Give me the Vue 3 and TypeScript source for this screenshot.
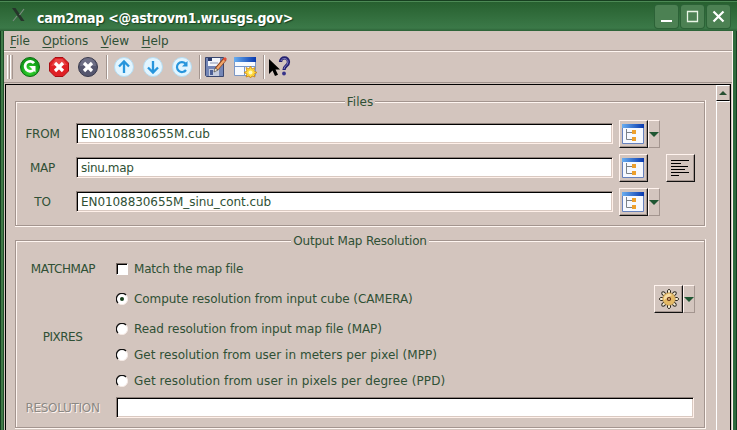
<script setup lang="ts">
interface FileRow { label: string; value: string; menu: boolean; align: boolean }

const menus: string[] = ['File', 'Options', 'View', 'Help']
const files: FileRow[] = [
  { label: 'FROM', value: 'EN0108830655M.cub', menu: true, align: false },
  { label: 'MAP', value: 'sinu.map', menu: false, align: true },
  { label: 'TO', value: 'EN0108830655M_sinu_cont.cub', menu: true, align: false },
]
const options: string[] = [
  'Compute resolution from input cube (CAMERA)',
  'Read resolution from input map file (MAP)',
  'Get resolution from user in meters per pixel (MPP)',
  'Get resolution from user in pixels per degree (PPD)',
]
const teeth: number[] = [0, 45, 90, 135, 180, 225, 270, 315]
</script>

<template>
  <div class="window">
    <header class="titlebar">
      <svg class="xlogo" width="18" height="18" viewBox="0 0 18 18">
        <path d="M2 1h3.500l9 13h-3.500z" fill="#26352b" />
        <path d="M14 2L9.500 8M7 9L3 14" stroke="#7b8c80" stroke-width="1.200" />
      </svg>
      <span class="title">cam2map &lt;@astrovm1.wr.usgs.gov&gt;</span>
      <div class="winbtns">
        <svg class="winbtn" viewBox="0 0 23 23"><path d="M6 16h11" stroke="#fff" stroke-width="2" /></svg>
        <svg class="winbtn" viewBox="0 0 23 23"><path d="M6.500 6.500h10v10h-10z" fill="none" stroke="#e9f5e6" stroke-width="1.300" /></svg>
        <svg class="winbtn" viewBox="0 0 23 23"><path d="M6.500 6.500l10 10M16.500 6.500l-10 10" stroke="#fff" stroke-width="2.200" /></svg>
      </div>
    </header>
    <div class="body">
      <nav class="menubar">
        <span v-for="m in menus" :key="m" class="menu"><u>{{ m[0] }}</u>{{ m.slice(1) }}</span>
      </nav>
      <div class="toolbar">
        <i class="grip" /><i class="grip" />
        <svg class="tool first" viewBox="0 0 22 22">
          <defs><radialGradient id="gg" cx=".5" cy=".7"><stop offset="0" stop-color="#3ce035" /><stop offset="1" stop-color="#119c18" /></radialGradient></defs>
          <circle cx="11" cy="11" r="9.500" fill="url(#gg)" stroke="#0c6b12" />
          <path d="M15 7.200A5 5 0 1 0 14.500 14" fill="none" stroke="#fff" stroke-width="2.800" />
          <path d="M10 10h6.500v6.500z" fill="#fff" />
        </svg>
        <svg class="tool" viewBox="0 0 22 22">
          <path d="M7 1.500h8l5.500 5.500v8l-5.500 5.500H7L1.500 15V7z" fill="#e02025" stroke="#a80d12" />
          <path d="M3 10L7.500 3h7L19 9" fill="#f06a68" opacity=".5" />
          <path d="M7 7l8 8M15 7l-8 8" stroke="#fff" stroke-width="3.200" />
        </svg>
        <svg class="tool" viewBox="0 0 22 22">
          <circle cx="11" cy="11" r="9.500" fill="#55566e" stroke="#393a4d" />
          <path d="M3 10a8 8 0 0 1 16 0" fill="#85869b" opacity=".5" />
          <path d="M7 7l8 8M15 7l-8 8" stroke="#fff" stroke-width="3.200" />
        </svg>
        <i class="sep" />
        <svg class="tool" viewBox="0 0 22 22">
          <circle cx="11" cy="11" r="9.500" fill="#e2f5ff" stroke="#b4dcf2" />
          <path d="M11 17V6M6 10.500l5-5 5 5" fill="none" stroke="#2795dc" stroke-width="2.300" />
        </svg>
        <svg class="tool" viewBox="0 0 22 22">
          <circle cx="11" cy="11" r="9.500" fill="#e2f5ff" stroke="#b4dcf2" />
          <path d="M11 5v11M6 11.500l5 5 5-5" fill="none" stroke="#2795dc" stroke-width="2.300" />
        </svg>
        <svg class="tool" viewBox="0 0 22 22">
          <circle cx="11" cy="11" r="9.500" fill="#e2f5ff" stroke="#b4dcf2" />
          <path d="M15 14a5 5 0 1 1-.5-6.500" fill="none" stroke="#2795dc" stroke-width="2.200" />
          <path d="M16.500 5v5.500h-5.500z" fill="#2795dc" />
        </svg>
        <i class="sep two" />
        <svg class="tool disk" viewBox="0 0 24 22">
          <path d="M1.500 1.500h18v19h-17l-1-1z" fill="#7486b6" stroke="#39466f" />
          <path d="M4 2h12v8H4z" fill="#f2f5fb" /><path d="M4 2h4v3H4z" fill="#2b3b6b" /><path d="M6 7h8" stroke="#8b97b5" />
          <path d="M5 13h10v7H5z" fill="#c5cbdc" /><path d="M6 14h3v5H6z" fill="#4c5e94" />
          <path d="M21 3L12.500 13" stroke="#8a421d" stroke-width="4" /><path d="M20.500 4L12.800 13" stroke="#f1a66a" stroke-width="2.300" />
          <path d="M10 16l1-4 3 2z" fill="#fff0d0" stroke="#333" stroke-width=".6" /><path d="M19 3l2-2 2 2-2 2z" fill="#e34b36" />
        </svg>
        <svg class="tool wide" viewBox="0 0 24 22">
          <defs><linearGradient id="wg"><stop offset="0" stop-color="#69aef0" /><stop offset="1" stop-color="#0838ae" /></linearGradient></defs>
          <path d="M1.500 1.500h21v18h-21z" fill="#f7faff" stroke="#7c97c4" /><path d="M1 1h22v5H1z" fill="url(#wg)" />
          <path d="M1 10.500h21M11.500 11v8" stroke="#7698cf" />
          <path d="M17.500 10l1.500 3 3-1.500-1 3.500 3 1.500-3 1.500 1 3-3-1-1.500 2-1.500-2-3 1 1-3-3-1.500 3-1.500-1-3.500 3 1.500z" fill="#ffda3c" stroke="#c78312" stroke-width=".8" />
          <circle cx="17.500" cy="16.500" r="2" fill="#fff9bd" />
        </svg>
        <i class="sep three" />
        <svg class="tool help" viewBox="0 0 24 22">
          <path d="M1 3v15l3.500-3.500L7 20l3-1.300L7.500 13.500H12z" fill="#000" />
          <path d="M12.500 6c0-5.500 8-5.500 8 0 0 4-4.500 3.500-4.500 8" fill="none" stroke="#24206f" stroke-width="3.300" />
          <path d="M13 5c1-4 7-3 7 1 0 3.500-4 4-4 7" fill="none" stroke="#827fc4" stroke-width="1" />
          <circle cx="16" cy="17.500" r="1.900" fill="#37338a" />
        </svg>
      </div>
      <main class="viewport">
        <div class="pane">
          <section class="group files">
            <h2 class="caption"><span>Files</span></h2>
            <div v-for="f in files" :key="f.label" class="filerow">
              <label>{{ f.label }}</label>
              <div class="field">{{ f.value }}</div>
              <div class="split">
                <button class="btn tree">
                  <svg width="22" height="20" viewBox="0 0 22 20">
                    <path d="M.5.5h21v19H.5z" fill="#f6f9ff" stroke="#6581bd" /><path d="M0 0h22v4H0z" fill="url(#wg)" />
                    <path d="M4.500 5v10.500H10M4.500 8.500H10" fill="none" stroke="#7a8188" />
                    <path d="M10 6h4v4h-4zM10 13h4v4h-4z" fill="#eda02d" />
                  </svg>
                </button>
                <span v-if="f.menu" class="drop"><i /></span>
              </div>
              <button v-if="f.align" class="btn align">
                <svg width="19" height="16" viewBox="0 0 19 16"><path d="M0 .5h18M0 3.500h10M0 6.500h17M0 9.500h14M0 12.500h18M0 15.500h8" stroke="#000" stroke-width="1" /></svg>
              </button>
            </div>
          </section>
          <section class="group output">
            <h2 class="caption tight"><span>Output Map Resolution</span></h2>
            <div class="grid">
              <label class="match">MATCHMAP</label>
              <div class="choice"><i class="check" />Match the map file</div>
              <label class="pix">PIXRES</label>
              <div class="radios">
                <div v-for="(o, i) in options" :key="o" class="choice">
                  <svg class="radio" width="12" height="12" viewBox="0 0 12 12">
                    <circle cx="6" cy="6" r="5.500" fill="#fff" />
                    <path d="M2 10A5.500 5.500 0 0 1 10 2" fill="none" stroke="#111" stroke-width="1.300" />
                    <path d="M2 10A5.500 5.500 0 0 0 10 2" fill="none" stroke="#f5eae5" />
                    <circle v-if="i === 0" cx="6" cy="6" r="2" fill="#163f1c" />
                  </svg>{{ o }}
                </div>
              </div>
              <div class="split gear">
                <button class="btn">
                  <svg width="22" height="22" viewBox="-11 -11 22 22">
                    <g stroke="#29251d" fill="#f7eed6"><path v-for="t in teeth" :key="t" d="M-1.500-5V-8.500Q0-11 1.500-8.500V-5z" :transform="`rotate(${t})`" /></g>
                    <circle r="6.300" fill="#e4b965" stroke="#b99557" stroke-width=".6" /><path d="M-5 1A5 5 0 0 1 3-4z" fill="#f7dda4" />
                    <circle r="1.500" fill="#e8c78b" stroke="#5c2712" stroke-width="1.200" />
                  </svg>
                </button>
                <span class="drop"><i /></span>
              </div>
              <label class="disabled">RESOLUTION</label>
              <div class="field resolution" />
            </div>
          </section>
        </div>
        <aside class="scroll"><div class="up"><i /></div><div class="thumb" /></aside>
      </main>
    </div>
  </div>
</template>

<style>
body { overflow: hidden; }
</style>

<style scoped>
* { box-sizing: border-box; }
.window { width: 737px; height: 430px; display: flex; flex-direction: column; background: linear-gradient(90deg, #123c1d 0 1px, #3f7a48 1px 3px, #1f5029 3px 4px, #d3c5be 4px 732px, #fff3ee 732px 733px, #2f6b3d 733px 736px, #163e20 736px); font: 12px/16px "DejaVu Sans", sans-serif; color: #2f5035; }
.titlebar { height: 31px; flex: none; display: flex; padding: 5px 7px 0 10px; background: linear-gradient(#173f20 0 1px, #4c8955 1px 2px, #27602f 2px, #3b7948 28px, #2b6136 31px); }
.xlogo { margin-top: 2px; }
.title { margin-left: 9px; flex: 1; font: bold 14px/26px "DejaVu Sans Condensed", "DejaVu Sans", sans-serif; font-stretch: condensed; letter-spacing: -.21px; color: #fff; text-shadow: 1px 1px 1px #173f20; white-space: nowrap; }
.winbtns { display: flex; gap: 3px; }
.winbtn { width: 23px; height: 23px; border-radius: 3px; background: #4c8153; box-shadow: 0 0 0 1px #2c6237; }
.body { flex: 1; min-height: 0; margin: 0 5px 0 4px; display: flex; flex-direction: column; }
.menubar { height: 21px; flex: none; display: flex; gap: 12.600px; padding: 2px 0 0 6px; letter-spacing: -.08px; border-bottom: 1px solid #fff6f1; box-shadow: inset 0 -1px #a89a94; }
.menu { height: 16px; }
.menu u { text-underline-offset: 2px; text-decoration-thickness: 1px; }
.toolbar { height: 31px; flex: none; display: flex; align-items: center; padding: 0 0 0 3px; border-bottom: 1px solid #a0938d; }
.grip { width: 3px; height: 24px; border-left: 1px solid #fff; border-right: 1px solid #a3958f; }
.tool { width: 22px; height: 22px; margin-right: 7px; flex: none; }
.tool.first { margin-left: 6px; }
.sep { width: 2px; height: 24px; margin: 0 5px 0 0; border-left: 1px solid #a3958f; border-right: 1px solid #fff; }
.sep.two { margin: 0 3px 0 -1px; }
.disk, .wide, .help { width: 24px; }
.disk { margin-right: 5px; }
.wide { margin-right: 6px; }
.sep.three { margin: 0 3px 0 0; }
.viewport { flex: 1; min-height: 0; margin: 1px 1px 0 1px; border: solid #000; border-width: 1px 1px 0 1px; display: flex; }
.pane { width: 710px; padding: 10px 10px 0 9px; display: flex; flex-direction: column; gap: 7px; }
.group { flex: none; padding: 0 1px; background: linear-gradient(#a3958f, #a3958f) 0 6px / 690px 1px no-repeat, linear-gradient(#fff6f1, #fff6f1) 1px 7px / 688px 1px no-repeat, linear-gradient(#a3958f, #a3958f) 0 6px / 1px 100% no-repeat, linear-gradient(#fff6f1, #fff6f1) 1px 7px / 1px 100% no-repeat, linear-gradient(#a3958f, #a3958f) 100% 6px / 1px 100% no-repeat; border-bottom: 1px solid #fff6f1; border-right: 1px solid #fff6f1; border-image: linear-gradient(transparent 6px, #fff6f1 6px) 1; box-shadow: inset 0 -1px #a3958f; }
.caption { margin: 0; font-weight: normal; font-size: 12px; line-height: 14px; text-align: center; }
.tight { letter-spacing: -.18px; }
.caption span { padding: 0 2px; background: #d3c5be; }
.files { height: 132px; }
.files .caption { margin-bottom: 8px; }
.filerow { height: 34px; display: grid; grid-template-columns: 60px 531px 41px 29px; column-gap: 6px; align-items: start; padding-top: 6px; }
.filerow label { text-align: center; padding: 3px 8px 0 0; margin-left: 1px; letter-spacing: -.25px; }
.filerow .field { margin-left: -6px; }
.filerow:nth-child(3) .field { letter-spacing: -.35px; }
.filerow:nth-child(4) .field { letter-spacing: -.07px; }
.filerow .split { margin-top: -3px; }
.filerow .align { margin-top: -3px; }
.field { height: 21px; background: #fff; border: 1px solid; border-color: #8f827c #fff0e9 #fff0e9 #8f827c; box-shadow: inset 1px 1px #000, inset -1px -1px #d9c9c1; padding: 2px 4px; }
.split { display: flex; height: 28px; }
.btn { width: 29px; height: 28px; padding: 0; display: flex; align-items: center; justify-content: center; background: #d3c5be; border: solid; border-width: 1px; border-color: #fff3ee #111 #111 #fff3ee; box-shadow: inset -1px -1px #a3958f; }
.tree { padding-right: 1px; }
.drop { width: 12px; height: 28px; border: 1px solid; border-color: #fff3ee #a3958f #a3958f #fff3ee; display: flex; align-items: center; justify-content: center; }
.drop i { border: solid transparent; border-width: 5px 5px 0; border-top-color: #1f5632; margin: 0 -1px; }
.output { height: 195px; }
.grid { display: grid; grid-template-columns: 100px 578px; grid-template-rows: 28px 114px 21px; padding-top: 7px; position: relative; }
.grid label { text-align: center; letter-spacing: -.3px; }
.grid .match { padding: 6px 6px 0 0; letter-spacing: -.38px; }
.choice { display: flex; align-items: center; gap: 6px; height: 16px; white-space: pre; }
.grid > .choice { margin-top: 6px; letter-spacing: -.2px; }
.check { width: 12px; height: 12px; background: #fff; border: 1px solid; border-color: #756963 #fff #fff #756963; box-shadow: inset 1px 1px #000; }
.grid .pix { padding: 46px 7px 0 0; letter-spacing: -.5px; }
.radios { display: flex; flex-direction: column; padding-top: 8px; gap: 10px; }
.radios .choice:first-child { margin-bottom: 4px; letter-spacing: -.06px; }
.radios .choice:nth-child(2) { letter-spacing: -.09px; }
.radios .choice:nth-child(3) { letter-spacing: .03px; }
.radios .choice:nth-child(4) { letter-spacing: .1px; }
.gear { position: absolute; top: 37px; right: 9px; }
.disabled { color: #8b8984; text-shadow: 1px 1px #fff3ee; padding: 3px 7px 0 0; }
.scroll { flex: 1; display: flex; flex-direction: column; }
.up, .thumb { border: solid; border-width: 1px 1px 1px 1px; border-color: #fff #9b8d87 #000 #fff; }
.up { height: 16px; display: flex; align-items: center; justify-content: center; }
.up i { border: solid transparent; border-width: 0 4px 4px; border-bottom-color: #264f31; }
.thumb { flex: 1; border-bottom: 0; border-right-width: 0; }
</style>
